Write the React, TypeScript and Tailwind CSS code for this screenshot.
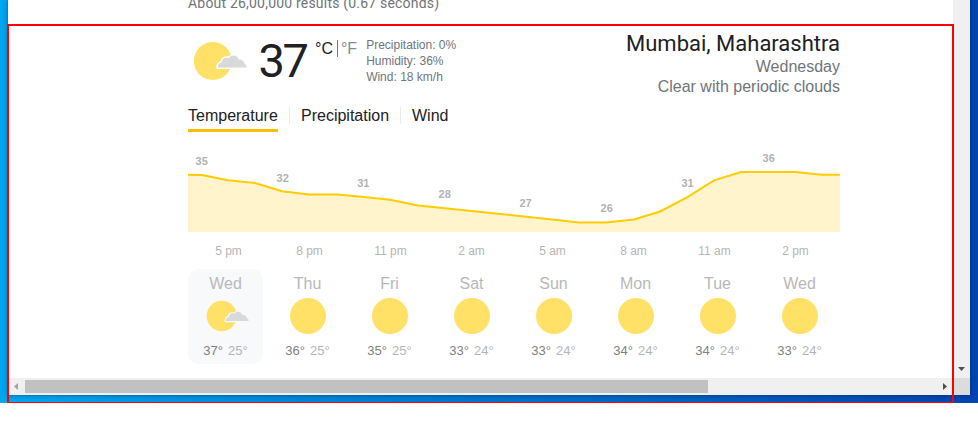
import React from "react";

const hourly = [
  { x: 13.7, y: 20, t: 35 },
  { x: 94.7, y: 37, t: 32 },
  { x: 175.3, y: 42, t: 31 },
  { x: 256.7, y: 53, t: 28 },
  { x: 337.5, y: 62, t: 27 },
  { x: 418.7, y: 67, t: 26 },
  { x: 499.5, y: 42, t: 31 },
  { x: 580.7, y: 17, t: 36 },
];

const hours = ["5 pm", "8 pm", "11 pm", "2 am", "5 am", "8 am", "11 am", "2 pm"];

const days = [
  { name: "Wed", hi: 37, lo: 25 },
  { name: "Thu", hi: 36, lo: 25 },
  { name: "Fri", hi: 35, lo: 25 },
  { name: "Sat", hi: 33, lo: 24 },
  { name: "Sun", hi: 33, lo: 24 },
  { name: "Mon", hi: 34, lo: 24 },
  { name: "Tue", hi: 34, lo: 24 },
  { name: "Wed", hi: 33, lo: 24 },
];

const line =
  "0,29.7 14,29.9 40,35.3 67,38 94,46.3 121,49.5 149,49.5 176,52 202,54.8 230,60.5 257,63.3 322,70 364,74.5 391,77.5 418,77.5 446,74.5 472,66.5 499,52.3 526,35.3 553,27 607,27 634,29.8 652,29.8";

function PartlySunny({ className, halo }: { className: string; halo: string }) {
  return (
    <svg viewBox="0 0 54 40" className={className}>
      <circle cx="19.8" cy="20" r="19" fill="#ffe168" />
      <path
        d="M24.6 26.4C24.9 23.6 26.3 21.6 28.8 21.2C29.2 17.6 31.8 15.9 35.9 17C38.5 13.6 44.2 13.6 45.7 18.6C49.7 18.4 51.3 21 51.6 22.9C53.2 23.4 53.6 25 53.6 26.4Z"
        fill="#d9d9d9"
        stroke={halo}
        strokeWidth="3"
        strokeLinejoin="round"
        paintOrder="stroke"
      />
    </svg>
  );
}

function Chart() {
  return (
    <svg viewBox="0 0 652 87" className="block h-[87px] w-[652px]">
      <polygon points={`${line} 652,87 0,87`} fill="#fff4cc" />
      <polyline points={line} fill="none" stroke="#ffcc00" strokeWidth="2" />
      {hourly.map((p) => (
        <text key={p.x} x={p.x} y={p.y} textAnchor="middle" className="fill-[#b2b2b2] text-[11px] font-bold">
          {p.t}
        </text>
      ))}
    </svg>
  );
}

export default function App() {
  return (
    <div className="relative h-[428px] w-[978px] overflow-hidden bg-white font-['Liberation_Sans',Arial,sans-serif]">
      <div className="flex h-[403px] bg-linear-to-r from-[#00a6ef] via-[#0074ca] to-[#0044b0] pl-2">
        <div className="h-[395px] w-[962px] bg-white shadow-[0_0_4px_0px_rgba(0,25,60,0.6)]">
          <div className="flex h-[378px]">
            <div className="flex w-[945px] flex-col overflow-hidden pl-[180px]">
              <div className="-mt-[7px] h-5 whitespace-nowrap font-['Roboto',sans-serif] text-[14px] leading-5 tracking-[0.2px] text-[#70757a]">
                About 26,00,000 results (0.67 seconds)
              </div>

              <div className="flex h-[84px] w-[652px] pt-[18px]">
                <PartlySunny className="ml-[4.5px] mt-[10px] h-10 w-[54px]" halo="#ffffff" />
                <div className="ml-[12px] mt-[6px] w-[56px] font-['Roboto',sans-serif] text-[47px] leading-[48px] tracking-[-2.5px] text-[#202124]">37</div>
                <div className="mt-[8px] flex h-[20px] whitespace-nowrap text-[16px] leading-[20px] text-[#202124]">
                  <span className="ml-[0.5px]">°C</span>
                  <span className="ml-[4px] mt-[1px] h-[17px] w-px bg-[#70757a]" />
                  <span className="ml-[3px] text-[#878b90]">°F</span>
                </div>
                <div className="ml-[9px] mt-[6px] whitespace-nowrap text-[12px] leading-4 text-[#70757a]">
                  <div>Precipitation: 0%</div>
                  <div>Humidity: 36%</div>
                  <div>Wind: 18 km/h</div>
                </div>
                <div className="ml-auto whitespace-nowrap text-right text-[16px] leading-5 text-[#70757a]">
                  <div className="h-[26px] font-['Roboto',sans-serif] text-[22px] leading-[26px] text-[#202124]">Mumbai, Maharashtra</div>
                  <div>Wednesday</div>
                  <div>Clear with periodic clouds</div>
                </div>
              </div>

              <div className="mt-[8px] flex h-[27px] text-[16px] leading-[21px] text-[#202124]">
                <div className="w-[90px] border-b-[3px] border-[#fbbc04]">Temperature</div>
                <div className="ml-[11px] mt-[2px] h-[17px] w-px bg-[#ebebeb]" />
                <div className="ml-[11px] w-[99px]">Precipitation</div>
                <div className="mt-[2px] h-[17px] w-px bg-[#ebebeb]" />
                <div className="ml-[11px]">Wind</div>
              </div>

              <div className="mt-[13px]">
                <Chart />
              </div>
              <div className="mt-[11px] flex h-4 text-center text-[12px] leading-4 text-[#b5b5b5]">
                {hours.map((h) => (
                  <div key={h} className="w-[81px] shrink-0">{h}</div>
                ))}
              </div>

              <div className="mt-[10px] flex gap-[7px]">
                {days.map((d, i) => (
                  <div
                    key={i}
                    className={`flex h-[95px] w-[75px] shrink-0 flex-col items-center rounded-[10px] pt-[5px] ${i === 0 ? "bg-[#f8f9fb]" : ""}`}
                  >
                    <div className="h-5 text-[16px] leading-5 text-[#b8b8b8]">{d.name}</div>
                    <div className="mt-[4px] flex h-9 items-center">
                      {i === 0 ? (
                        <PartlySunny className="ml-[3px] h-8 w-[43px]" halo="#f8f9fb" />
                      ) : (
                        <div className="ml-[1px] size-9 rounded-full bg-[#ffe168]" />
                      )}
                    </div>
                    <div className="mt-[9px] flex gap-[5px] text-[13px] leading-4">
                      <span className="text-[#808080]">{d.hi}°</span>
                      <span className="text-[#b5b5b5]">{d.lo}°</span>
                    </div>
                  </div>
                ))}
              </div>
            </div>
            <div className="flex w-[17px] items-end justify-center bg-[#f0f0f0] pb-[7px]">
              <svg viewBox="0 0 7 4" className="h-1 w-[7px]" fill="#505050">
                <path d="M0 0h7L3.5 4z" />
              </svg>
            </div>
          </div>
          <div className="flex h-[17px] items-center bg-[#f0f0f0]">
            <svg viewBox="0 0 4 7" className="ml-[6px] h-[7px] w-1" fill="#a3a3a3">
              <path d="M4 0v7L0 3.5z" />
            </svg>
            <div className="ml-[7px] h-[13px] w-[683px] bg-[#c1c1c1]" />
            <svg viewBox="0 0 4 7" className="ml-auto mr-[6px] h-[7px] w-1" fill="#505050">
              <path d="M0 0v7l4-3.5z" />
            </svg>
            <div className="h-full w-[17px] bg-[#dcdcdc]" />
          </div>
        </div>
      </div>
      <div className="pointer-events-none absolute left-[7px] top-[24px] h-[379px] w-[947px] border-2 border-b border-[#ff0000]" />
    </div>
  );
}
